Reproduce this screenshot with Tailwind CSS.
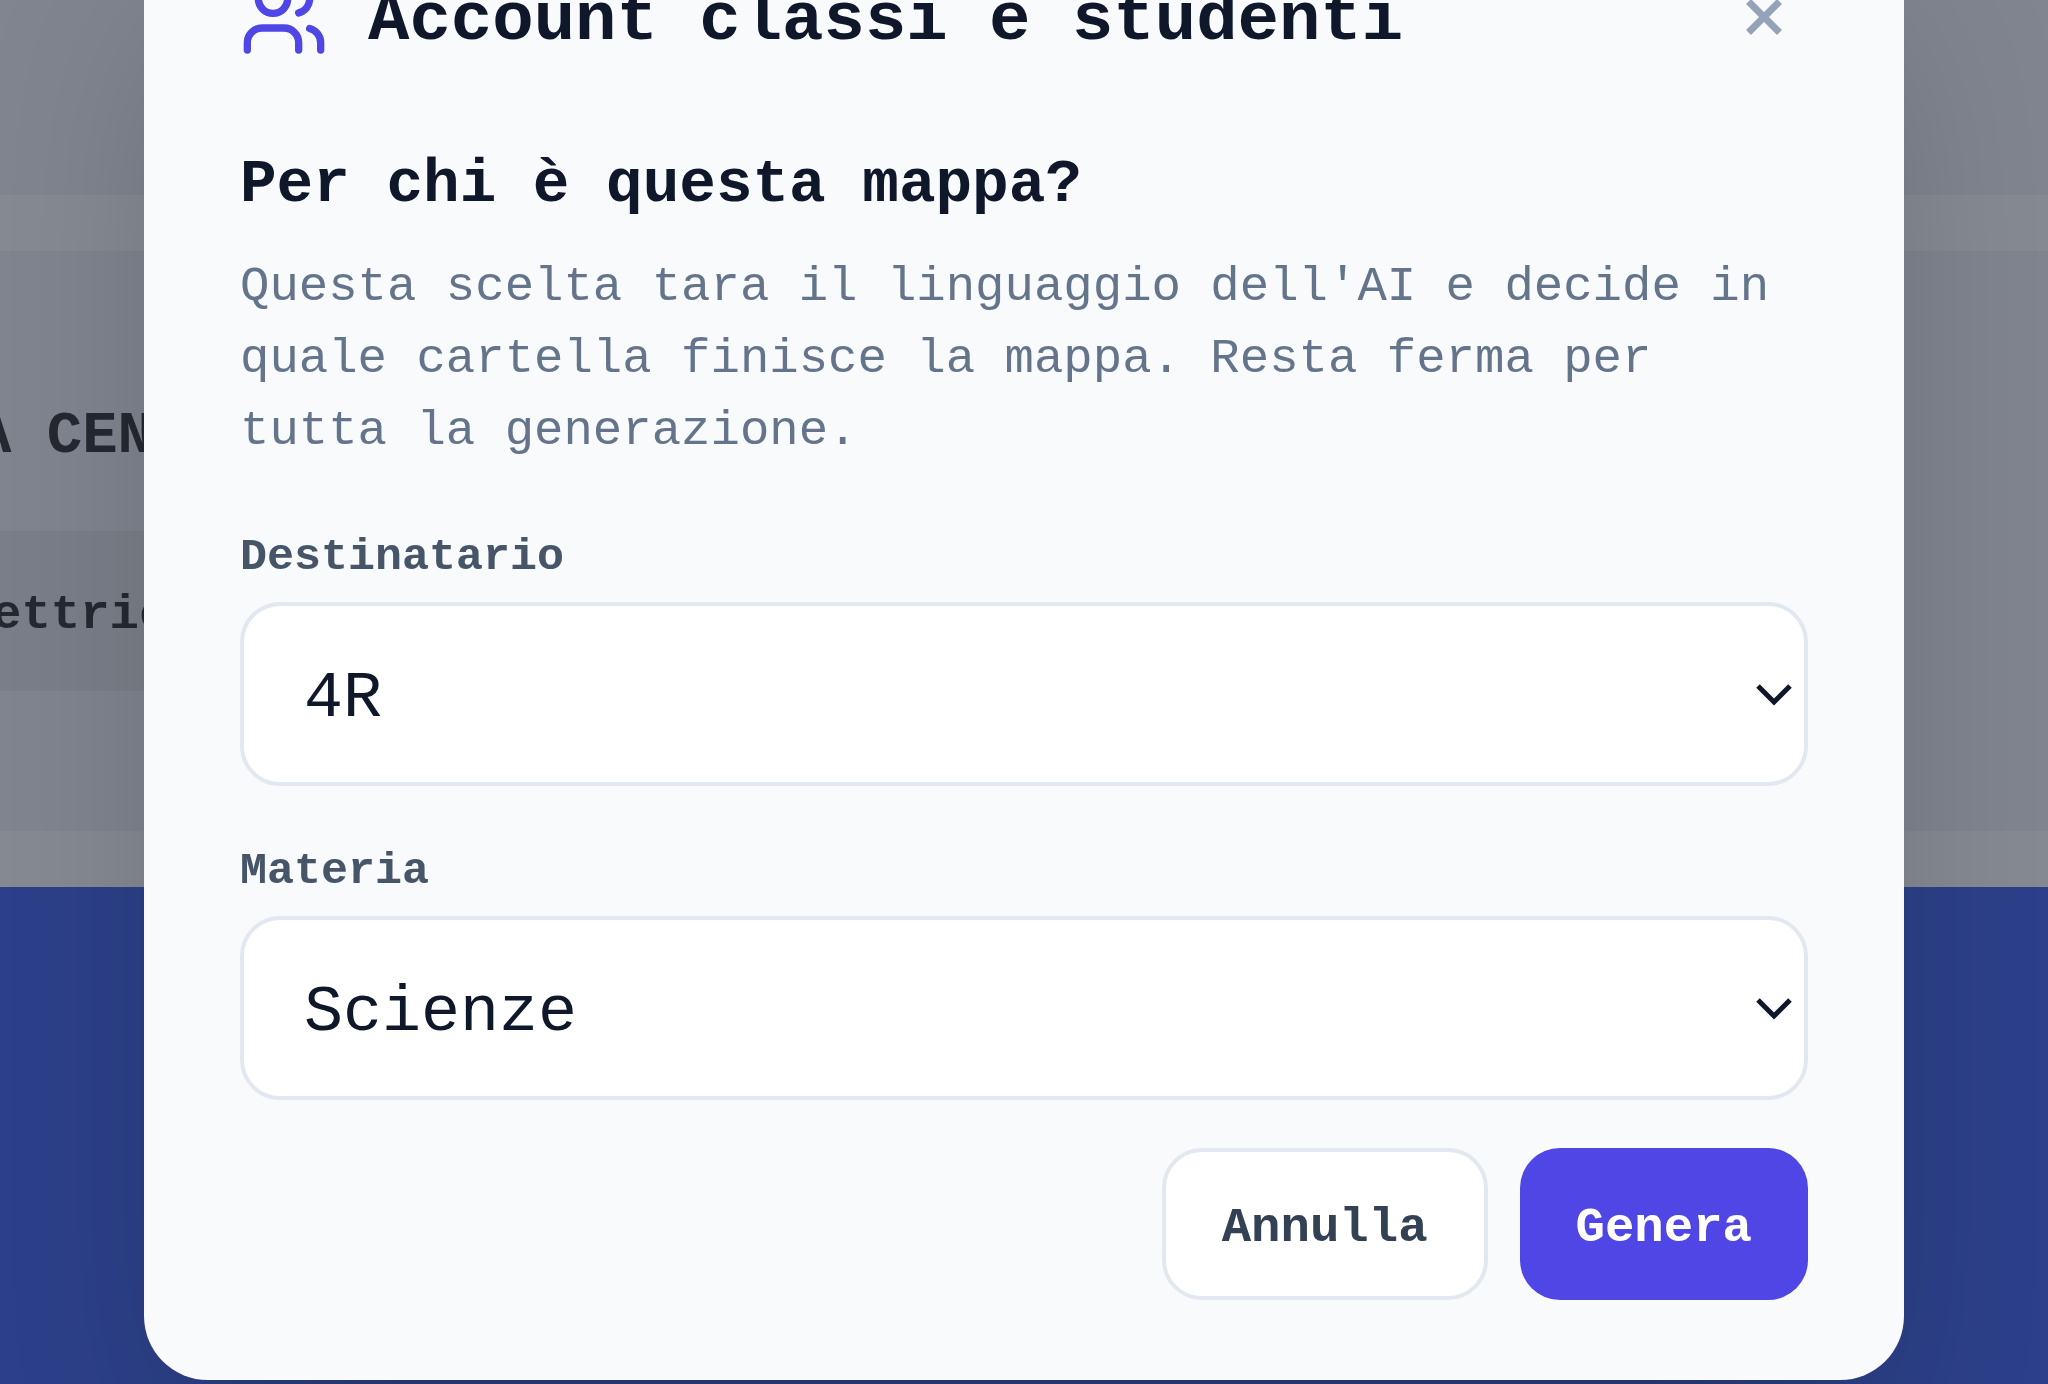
<!DOCTYPE html>
<html lang="it">
<head>
<meta charset="utf-8">
<meta name="viewport" content="width=device-width, initial-scale=1">
<title>Account classi e studenti</title>
<script src="https://cdn.jsdelivr.net/npm/@tailwindcss/browser@4"></script>
</head>
<body class="h-screen overflow-hidden bg-white font-['Liberation_Mono',monospace] text-[#0f172a]">
  <!-- Page behind the dialog -->
  <main class="flex h-full flex-col overflow-hidden bg-[#fcfcfc] font-bold whitespace-nowrap text-[#3b3a38]" aria-hidden="true">
    <div class="h-[195px] shrink-0 bg-[#f1f3f6]"></div>
    <section class="mt-14 flex h-[580px] shrink-0 flex-col bg-[#f1f3f6]">
      <h3 class="flex h-[280px] items-end pb-[54px] text-[59px] leading-[80px]"><span class="-ml-6">A CEN</span></h3>
      <p class="mr-48 flex h-40 items-center bg-[#e5e7ea] pt-2 text-[49px] leading-[72px]"><span class="-ml-2">ettric</span></p>
    </section>
    <div class="mt-14 grow bg-[#4a6aea]"></div>
  </main>

  <!-- Dialog -->
  <div class="fixed inset-0 flex flex-col justify-end overflow-hidden bg-[#0f172a]/50 px-36 pb-1">
    <div role="dialog" aria-modal="true" aria-labelledby="title" class="mx-auto w-full max-w-[1760px] shrink-0 rounded-[64px] bg-[#f8fafc] px-24 py-20 shadow-[0_100px_200px_-48px_rgba(0,0,0,0.25)]">
      <header class="mb-[74px] flex items-start gap-10">
        <svg class="size-[88px] shrink-0 text-[#4f46e5]" viewBox="0 0 24 24" fill="none" stroke="currentColor" stroke-width="2" stroke-linecap="round" stroke-linejoin="round" aria-hidden="true">
          <path d="M16 21v-2a4 4 0 0 0-4-4H6a4 4 0 0 0-4 4v2"/>
          <circle cx="9" cy="7" r="4"/>
          <path d="M22 21v-2a4 4 0 0 0-3-3.87"/>
          <path d="M16 3.13a4 4 0 0 1 0 7.75"/>
        </svg>
        <h1 id="title" class="grow text-[69px] leading-[96px] font-bold">Account classi e studenti</h1>
        <button type="button" aria-label="Chiudi" class="flex size-[88px] shrink-0 items-center justify-center text-[#94a3b8]">
          <svg class="size-9" viewBox="0 0 36 36" fill="none" stroke="currentColor" stroke-width="7" aria-hidden="true"><path d="M2.5 2.5l31 31M33.5 2.5l-31 31"/></svg>
        </button>
      </header>

      <form>
        <h2 class="mb-6 text-[61px] leading-[84px] font-bold">Per chi è questa mappa?</h2>
        <p class="text-[49px] leading-[72px] text-[#64748b]">Questa scelta tara il linguaggio dell'AI e decide in quale cartella finisce la mappa. Resta ferma per tutta la generazione.</p>

        <div class="mt-[59px]">
          <label for="recipient" class="mb-3 block text-[45px] leading-[64px] font-bold text-[#475569]">Destinatario</label>
          <div class="relative">
            <select id="recipient" class="block h-[184px] w-full appearance-none rounded-[40px] border-4 border-[#e2e8f0] bg-white pt-3 pl-[60px] text-[65px] text-[#0f172a]">
              <option>4R</option>
            </select>
            <svg class="pointer-events-none absolute top-[82px] right-4 h-[22px] w-9" viewBox="0 0 36 22" fill="none" stroke="#0f172a" stroke-width="5" aria-hidden="true"><path d="M2 2l16 16L34 2"/></svg>
          </div>
        </div>

        <div class="mt-[54px]">
          <label for="subject" class="mb-3 block text-[45px] leading-[64px] font-bold text-[#475569]">Materia</label>
          <div class="relative">
            <select id="subject" class="block h-[184px] w-full appearance-none rounded-[40px] border-4 border-[#e2e8f0] bg-white pt-3 pl-[60px] text-[65px] text-[#0f172a]">
              <option>Scienze</option>
            </select>
            <svg class="pointer-events-none absolute top-[82px] right-4 h-[22px] w-9" viewBox="0 0 36 22" fill="none" stroke="#0f172a" stroke-width="5" aria-hidden="true"><path d="M2 2l16 16L34 2"/></svg>
          </div>
        </div>

        <div class="mt-12 flex justify-end gap-8">
          <button type="button" class="h-[152px] rounded-[40px] border-4 border-[#e2e8f0] bg-white px-14 pt-[10px] text-[49px] font-bold text-[#334155]">Annulla</button>
          <button type="submit" class="h-[152px] rounded-[40px] bg-[#4f46e5] px-14 pt-[10px] text-[49px] font-bold text-white">Genera</button>
        </div>
      </form>
    </div>
  </div>
</body>
</html>
